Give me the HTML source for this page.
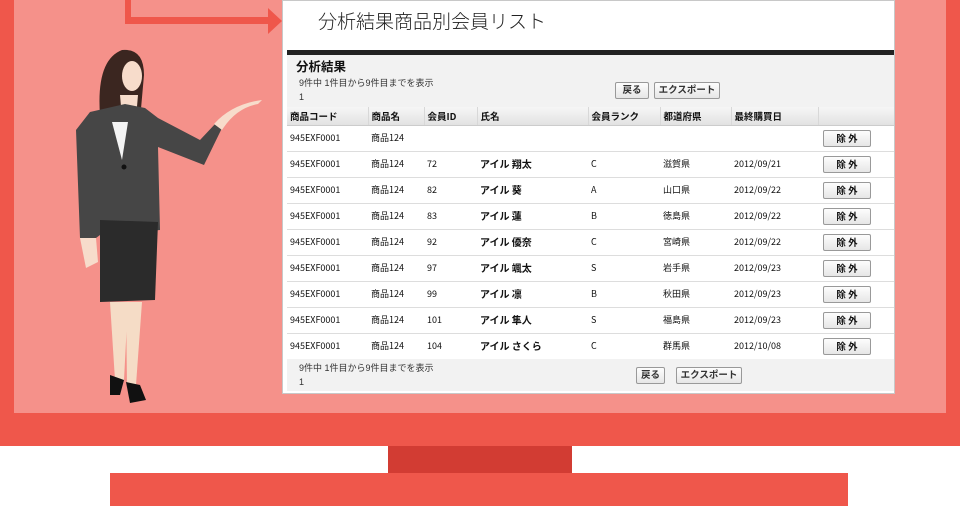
<!DOCTYPE html>
<html><head><meta charset="utf-8"><style>
*{margin:0;padding:0;box-sizing:border-box}
body{width:960px;height:506px;overflow:hidden;background:#fff;position:relative;font-family:"Liberation Sans","Noto Sans CJK JP",sans-serif;}
.a{position:absolute}
.frame{left:0;top:0;width:960px;height:446px;background:#ef574b}
.inner{left:14px;top:0;width:932px;height:413px;background:#f5918a}
.stand{left:388px;top:446px;width:184px;height:27px;background:#d23c33}
.base{left:110px;top:473px;width:738px;height:33px;background:#ef574b}
.panel{left:282px;top:0;width:613px;height:394px;background:#fff;border:1px solid #c8c8c8}
.title{left:318px;top:7px;font-size:19px;color:#222;font-family:"Noto Sans CJK JP",sans-serif;font-weight:300}
.bar{left:287px;top:50px;width:607px;height:5px;background:#222}
.sec{left:287px;top:55px;width:607px;height:52px;background:#f2f2f2}
.sec h3{position:absolute;left:9px;top:1px;font-size:12.5px;font-weight:bold;color:#111}
.info{font-size:9px;color:#333;line-height:14px}
.btn{position:absolute;height:17px;border:1px solid #999;border-radius:2px;background:linear-gradient(#fdfdfd,#e6e6e6);font-size:9.5px;font-weight:bold;color:#333;text-align:center;line-height:15px}
table{position:absolute;left:287px;top:107px;width:607px;border-collapse:collapse;font-size:9px;color:#111;font-family:"Noto Sans CJK JP",sans-serif}
th{height:18px;text-align:left;padding-left:3px;font-size:9.5px;line-height:12px;background:linear-gradient(#f6f6f6,#e2e2e2);border-right:1px solid #d8d8d8;border-bottom:1px solid #ccc}
td{height:26px;padding-left:3px;line-height:12px;vertical-align:middle;border-bottom:1px solid #ddd;background:#fff}
td.n{font-weight:bold;font-size:10px}
.ex{display:inline-block;width:48px;height:17px;border:1px solid #999;border-radius:2px;background:linear-gradient(#fdfdfd,#e6e6e6);font-weight:bold;text-align:center;line-height:15px;font-size:9.5px;margin-left:2px;vertical-align:middle}
.foot{left:287px;top:359px;width:607px;height:32px;background:#f2f2f2}
</style></head><body>
<div class="a frame"></div>
<div class="a inner"></div>
<div class="a stand"></div>
<div class="a base"></div>
<div class="a" style="left:125px;top:0;width:6px;height:24px;background:#ef574b"></div>
<div class="a" style="left:125px;top:17px;width:146px;height:7px;background:#ef574b"></div>
<svg class="a" style="left:266px;top:8px" width="17" height="26"><polygon points="2,0 16,13 2,26" fill="#ef574b"/></svg>

<svg class="a" style="left:60px;top:40px" width="210" height="370" viewBox="60 40 210 370">
<path d="M100 115 Q96 60 122 50 Q144 48 144 75 L140 120 L128 112 L110 120 Z" fill="#3b2620"/>
<ellipse cx="132" cy="76" rx="10" ry="15" fill="#f7dccb"/>
<path d="M120 95 L138 95 L136 118 L122 118 Z" fill="#f7dccb"/>
<path d="M90 112 L125 104 L145 108 L158 118 L200 140 L216 123 L222 128 L204 165 L158 147 L160 230 L100 235 L96 238 L80 238 L76 130 Z" fill="#464646"/>
<path d="M112 122 L128 122 L122 160 Z" fill="#f4f4f4"/>
<path d="M214 124 Q232 104 262 100 L258 104 Q236 108 222 130 Z" fill="#f7dccb"/>
<path d="M100 220 L158 222 L155 300 L100 302 Z" fill="#2b2b2b"/>
<path d="M110 302 L128 302 L124 380 L115 380 Z" fill="#f5dcc6"/>
<path d="M126 302 L142 302 L136 385 L127 385 Z" fill="#f5dcc6"/>
<path d="M80 238 L96 238 L98 262 L86 268 Z" fill="#f7dccb"/>
<path d="M110 375 L124 380 L120 395 L110 395 Z" fill="#111"/>
<path d="M126 382 L140 385 L146 400 L130 403 Z" fill="#111"/>
<circle cx="124" cy="167" r="2.5" fill="#111"/>
</svg>

<div class="a panel"></div>
<div class="a title">分析結果商品別会員リスト</div>
<div class="a bar"></div>
<div class="a sec"><h3>分析結果</h3>
<div class="info" style="position:absolute;left:12px;top:21px">9件中 1件目から9件目までを表示<br>1</div>
<div class="btn" style="left:328px;top:27px;width:34px">戻る</div>
<div class="btn" style="left:367px;top:27px;width:66px">エクスポート</div>
</div>
<table>
<tr><th style="width:81px">商品コード</th><th style="width:56px">商品名</th><th style="width:53px">会員ID</th><th style="width:111px">氏名</th><th style="width:72px">会員ランク</th><th style="width:71px">都道府県</th><th style="width:87px">最終購買日</th><th style="border-right:0"></th></tr>
<tr><td>945EXF0001</td><td>商品124</td><td></td><td></td><td></td><td></td><td></td><td><span class="ex">除 外</span></td></tr>
<tr><td>945EXF0001</td><td>商品124</td><td>72</td><td class="n">アイル 翔太</td><td>C</td><td>滋賀県</td><td>2012/09/21</td><td><span class="ex">除 外</span></td></tr>
<tr><td>945EXF0001</td><td>商品124</td><td>82</td><td class="n">アイル 葵</td><td>A</td><td>山口県</td><td>2012/09/22</td><td><span class="ex">除 外</span></td></tr>
<tr><td>945EXF0001</td><td>商品124</td><td>83</td><td class="n">アイル 蓮</td><td>B</td><td>徳島県</td><td>2012/09/22</td><td><span class="ex">除 外</span></td></tr>
<tr><td>945EXF0001</td><td>商品124</td><td>92</td><td class="n">アイル 優奈</td><td>C</td><td>宮崎県</td><td>2012/09/22</td><td><span class="ex">除 外</span></td></tr>
<tr><td>945EXF0001</td><td>商品124</td><td>97</td><td class="n">アイル 颯太</td><td>S</td><td>岩手県</td><td>2012/09/23</td><td><span class="ex">除 外</span></td></tr>
<tr><td>945EXF0001</td><td>商品124</td><td>99</td><td class="n">アイル 凛</td><td>B</td><td>秋田県</td><td>2012/09/23</td><td><span class="ex">除 外</span></td></tr>
<tr><td>945EXF0001</td><td>商品124</td><td>101</td><td class="n">アイル 隼人</td><td>S</td><td>福島県</td><td>2012/09/23</td><td><span class="ex">除 外</span></td></tr>
<tr><td>945EXF0001</td><td>商品124</td><td>104</td><td class="n">アイル さくら</td><td>C</td><td>群馬県</td><td>2012/10/08</td><td><span class="ex">除 外</span></td></tr>
</table>
<div class="a foot">
<div class="info" style="position:absolute;left:12px;top:2px">9件中 1件目から9件目までを表示<br>1</div>
<div class="btn" style="left:349px;top:8px;width:29px">戻る</div>
<div class="btn" style="left:389px;top:8px;width:66px">エクスポート</div>
</div>
</body></html>
